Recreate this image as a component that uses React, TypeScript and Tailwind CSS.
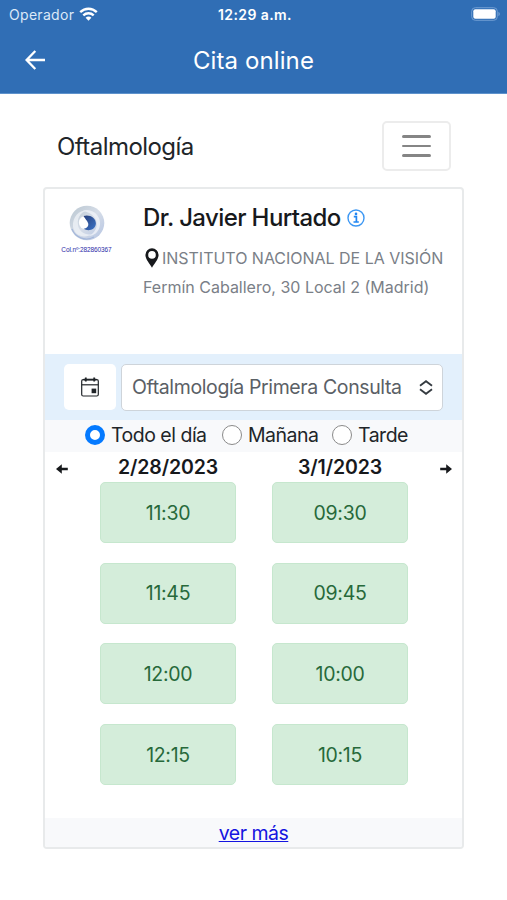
import React, { useState } from 'react';
import clsx from 'clsx';

type Day = {
  date: string;
  slots: string[];
};

type Shift = {
  id: string;
  label: string;
  className: string;
};

const days: Day[] = [
  { date: '2/28/2023', slots: ['11:30', '11:45', '12:00', '12:15'] },
  { date: '3/1/2023', slots: ['09:30', '09:45', '10:00', '10:15'] },
];

const shifts: Shift[] = [
  { id: 'all', label: 'Todo el día', className: 'w-[137px]' },
  { id: 'morning', label: 'Mañana', className: 'w-[110px]' },
  { id: 'evening', label: 'Tarde', className: 'w-[80px]' },
];

const WifiIcon = () => (
  <svg className="ml-[5px] h-[14px] w-[19px]" viewBox="0 0 19 14" fill="none" stroke="#fff" strokeWidth="2.4">
    <path d="M1.2 5.2C6 .6 13 .6 17.800 5.200" />
    <path d="M4.300 8.300C7.300 5.500 11.700 5.500 14.700 8.300" />
    <path d="M9.500 13.700L6.600 10.700C8.200 9.200 10.800 9.200 12.400 10.700Z" fill="#fff" stroke="none" />
  </svg>
);

const BatteryIcon = () => (
  <svg className="h-[14px] w-[30px]" viewBox="0 0 30 14">
    <rect x=".7" y=".7" width="25.600" height="12.600" rx="3.600" fill="none" stroke="#709dd2" strokeWidth="1" />
    <rect x="2.300" y="2.300" width="22.400" height="9.400" rx="2" fill="#fff" />
    <path d="M27.400 4.800C29.400 5.600 29.400 8.400 27.400 9.200Z" fill="#709dd2" />
  </svg>
);

const Logo = () => (
  <svg className="h-[36px] w-[36px]" viewBox="0 0 36 36">
    <defs>
      <linearGradient id="ring" x1="0" y1="0" x2="1" y2="1">
        <stop offset="0" stopColor="#b9c6d0" />
        <stop offset=".5" stopColor="#d6dde8" />
        <stop offset="1" stopColor="#b4c4e2" />
      </linearGradient>
      <linearGradient id="iris" x1="0" y1="0" x2="1" y2="1">
        <stop offset="0" stopColor="#28407c" />
        <stop offset="1" stopColor="#3c74c8" />
      </linearGradient>
    </defs>
    <circle cx="18" cy="18" r="17.300" fill="url(#ring)" />
    <path d="M4 22C3 10 12 3.500 21 5.500C14 5 7.500 11 9 20C10 27 17 31 24 29C15 34 6 31 4 22Z" fill="#edf1f6" opacity=".8" />
    <path d="M14 6C24 3 32 11 31 20C30 27 25 31 20 31C27 27 29 21 27 15C25 10 20 7 14 6Z" fill="#f1f4fa" opacity=".75" />
    <path d="M3 24C6 32 16 37 25 32" fill="none" stroke="#a3b6da" strokeWidth="1.200" />
    <circle cx="16.500" cy="17.500" r="6.600" fill="#fff" />
    <path d="M14.500 11C20.500 9 27 13 26.900 18.500C26.700 24.500 19.500 27 14.600 23.800C18.500 23 20.300 20.500 18.800 17.500C18 15.500 16.300 14 14.500 11Z" fill="url(#iris)" />
  </svg>
);

const PinIcon = () => (
  <svg className="h-[20px] w-[14px]" viewBox="0 0 14 20">
    <path
      fillRule="evenodd"
      d="M7 .3A6.600 6.600 0 0 0 .4 6.900C.4 11 5 16 7 19.700C9 16 13.600 11 13.600 6.900A6.600 6.600 0 0 0 7 .3ZM7 3.100A3.800 3.800 0 1 1 7 10.700A3.800 3.800 0 0 1 7 3.100Z"
      fill="#17191c"
    />
  </svg>
);

const InfoIcon = () => (
  <svg className="h-[18px] w-[18px]" viewBox="0 0 18 18">
    <circle cx="9" cy="9" r="8" fill="none" stroke="#3c97f3" strokeWidth="1.400" />
    <circle cx="9" cy="4.900" r="1.300" fill="#2086f2" />
    <path d="M6.800 7.700H9.400V13M6.500 13H11.800" fill="none" stroke="#2086f2" strokeWidth="1.700" />
  </svg>
);

const CalendarIcon = () => (
  <svg className="h-[20px] w-[18px]" viewBox="0 0 18 20" fill="none" stroke="#212529" strokeWidth="1.200">
    <rect x=".7" y="2.600" width="16.600" height="16.400" rx="1.500" />
    <path d="M.7 7.800H17.300" />
    <path d="M2.600 2.600H15.400" strokeWidth="1.800" />
    <path d="M4.800 .4V4.600M13.200 .4V4.600" strokeWidth="1.800" />
    <rect x="10.600" y="11.600" width="4.600" height="4.600" fill="#212529" stroke="none" />
  </svg>
);

const Arrow = ({ flip }: { flip?: boolean }) => (
  <svg className={clsx('h-[10px] w-[12px]', flip && 'rotate-180')} viewBox="0 0 12 10">
    <path d="M0 5L5.800 .2V3.800H11.800V6.200H5.800V9.800Z" fill="#17191c" />
  </svg>
);

const DayColumn = ({ date, slots }: Day) => (
  <div className="flex w-[136px] flex-col">
    <h3 className="flex h-[30px] items-center justify-center whitespace-nowrap pt-[2px] text-[19.5px] font-semibold tracking-[-0.1px] text-[#17191c]">
      {date}
    </h3>
    <ul className="flex flex-col gap-[19.600px]">
      {slots.map(slot => (
        <li
          key={slot}
          className="flex h-[61px] items-center justify-center rounded-[5px] border border-[#c6e7ce] bg-[#d4edda] pt-[2px] text-[19.5px] tracking-[-0.3px] text-[#27693a]"
        >
          {slot}
        </li>
      ))}
    </ul>
  </div>
);

export default function App() {
  const [shift, setShift] = useState('all');

  return (
    <div className="h-[900px] w-[507px] overflow-hidden bg-white font-['Inter',sans-serif] text-[#212529]">
      <header className="h-[94px] border-b border-[#5e92cc] bg-[#306eb5] text-white">
        <div className="grid h-[28px] grid-cols-3 items-center pl-[9px] pr-[6px]">
          <div className="flex items-center text-[14px] text-[#dce9f8]">
            <span className="tracking-[0.3px]">Operador</span>
            <WifiIcon />
          </div>
          <span className="text-center text-[14px] font-semibold tracking-[0.400px]">12:29 a.m.</span>
          <div className="flex justify-end">
            <BatteryIcon />
          </div>
        </div>
        <div className="grid h-[64px] grid-cols-[75px_1fr_75px] items-center">
          <button className="pl-[25px]" aria-label="Volver">
            <svg className="h-[20px] w-[21px]" viewBox="0 0 21 20" fill="none" stroke="#fff" strokeWidth="2.300">
              <path d="M20 10H2M10.300 1L1.600 10L10.300 19" />
            </svg>
          </button>
          <h1 className="pt-px text-center text-[24px] tracking-[0.1px]">Cita online</h1>
        </div>
      </header>

      <main className="px-[43px] pt-[27px]">
        <nav className="flex h-[50px] items-center justify-between pl-[14px] pr-[13px]">
          <span className="pt-px text-[24px] tracking-[-0.55px]">Oftalmología</span>
          <button className="flex h-[50px] w-[69px] flex-col items-center justify-center gap-[7px] rounded-[5px] border-2 border-[#ececec]" aria-label="Menú">
            <span className="h-[2.500px] w-[29px] rounded-full bg-[#858585]" />
            <span className="h-[2.500px] w-[29px] rounded-full bg-[#858585]" />
            <span className="h-[2.500px] w-[29px] rounded-full bg-[#858585]" />
          </button>
        </nav>

        <section className="mt-[16px] flex h-[662px] flex-col overflow-hidden rounded-[4px] border-2 border-[#e8eaeb]">
          <div className="flex h-[165px] pl-[15px]">
            <div className="flex w-[53px] flex-col items-center pt-[16px]">
              <Logo />
              <span className="mt-[5px] whitespace-nowrap font-['Liberation_Sans',sans-serif] text-[6.5px] leading-[8px] tracking-[-0.1px] text-[#2c2ca8]">
                Col.nº:282860367
              </span>
            </div>
            <div className="ml-[30px] whitespace-nowrap">
              <h2 className="mt-[13px] flex h-[32px] items-center text-[24px] font-medium tracking-[-0.6px] text-[#17191c]">
                Dr. Javier Hurtado
                <span className="ml-[6px]">
                  <InfoIcon />
                </span>
              </h2>
              <div className="mt-[9px] flex h-[29px] items-center pl-[2px] text-[16px] text-[#7a8087]">
                <PinIcon />
                <span className="ml-[3px] tracking-[-0.02px]">INSTITUTO NACIONAL DE LA VISIÓN</span>
              </div>
              <p className="flex h-[29px] items-center text-[16px] text-[#7a8087]">Fermín Caballero, 30 Local 2 (Madrid)</p>
            </div>
          </div>

          <div className="flex h-[66px] items-center gap-[5px] bg-[#e3f0fc] pl-[19px]">
            <button className="flex h-[46px] w-[52px] items-center justify-center rounded-[5px] bg-white" aria-label="Calendario">
              <CalendarIcon />
            </button>
            <button className="flex h-[47px] w-[322px] items-center justify-between whitespace-nowrap rounded-[5px] border border-[#ced4da] bg-white pl-[10px] pr-[9px] text-[19.5px] text-[#5a6066]">
              <span className="pt-[2px] tracking-[-0.38px]">Oftalmología Primera Consulta</span>
              <svg className="h-[15px] w-[14px]" viewBox="0 0 14 15" fill="none" stroke="#343a40" strokeWidth="1.800">
                <path d="M1 5.800L7 1.200L13 5.800M1 9.200L7 13.800L13 9.200" />
              </svg>
            </button>
          </div>

          <div className="flex h-[32px] items-center bg-[#f8f9fb] pl-[40px]">
            {shifts.map(({ id, label, className }) => (
              <button
                key={id}
                onClick={() => setShift(id)}
                className={clsx('flex h-full shrink-0 items-center gap-[6px] whitespace-nowrap text-[19.5px] tracking-[-0.5px]', className)}
              >
                <span
                  className={clsx(
                    'mb-[2px] h-5 w-5 shrink-0 rounded-full bg-white',
                    shift === id ? 'border-[5.500px] border-[#057aff]' : 'border-[1.500px] border-[#8a8a8a]'
                  )}
                />
                <span>{label}</span>
              </button>
            ))}
          </div>

          <div className="flex flex-1 justify-between pl-[11px] pr-[10px]">
            <button className="flex h-[33px] items-center" aria-label="Anterior">
              <Arrow />
            </button>
            <div className="flex gap-[36px]">
              {days.map(day => (
                <DayColumn key={day.date} {...day} />
              ))}
            </div>
            <button className="flex h-[33px] items-center" aria-label="Siguiente">
              <Arrow flip />
            </button>
          </div>

          <footer className="flex h-[29px] items-center justify-center bg-[#f8f9fb] pt-[3px]">
            <a href="#" className="text-[19.5px] tracking-[-0.5px] text-[#1414e0] underline">
              ver más
            </a>
          </footer>
        </section>
      </main>
    </div>
  );
}
